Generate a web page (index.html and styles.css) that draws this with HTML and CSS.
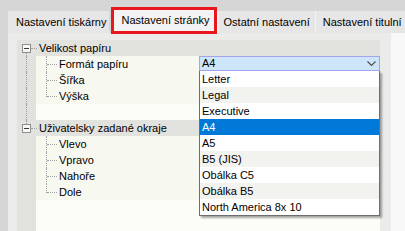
FILE: index.html
```html
<html>
<head>
    <title>Nastavení stránky</title>
    <meta name="viewport" content="width=device-width, initial-scale=1">
    <link rel="stylesheet" href="styles.css">
</head>
<body>
<div class="window">
    <div class="tabs">
        <div class="tab first">Nastavení tiskárny</div>
        <div class="tab active">Nastavení stránky</div>
        <div class="tab">Ostatní nastavení</div>
        <div class="tab">Nastavení titulní</div>
    </div>
    <div class="main">
        <div class="page">
            <div class="grid">
                <!-- === Velikost papíru === -->
                <div class="group open">
                    <span class="toggle"></span>
                    <span class="groupText">Velikost papíru</span>
                </div>
                <div class="prop">
                    <div class="gutter line"></div>
                    <div class="name">Formát papíru</div>
                    <div class="value">
                        <div class="combo">
                            <span>A4</span>
                            <svg width="9" height="6" viewBox="0 0 9 6"><path d="M0.5 0.5 L4.5 4.5 L8.5 0.5" fill="none" stroke="#4a4a4a" stroke-width="1.1"/></svg>
                        </div>
                        <ul class="list">
                            <li>Letter</li>
                            <li>Legal</li>
                            <li>Executive</li>
                            <li class="selected">A4</li>
                            <li>A5</li>
                            <li>B5 (JIS)</li>
                            <li>Obálka C5</li>
                            <li>Obálka B5</li>
                            <li>North America 8x 10</li>
                        </ul>
                    </div>
                </div>
                <div class="prop">
                    <div class="gutter line"></div>
                    <div class="name">Šířka</div>
                    <div class="value"></div>
                </div>
                <div class="prop">
                    <div class="gutter line"></div>
                    <div class="name last">Výška</div>
                    <div class="value"></div>
                </div>
                <div class="prop blank">
                    <div class="gutter line"></div>
                    <div class="name"></div>
                </div>

                <!-- === Okraje === -->
                <div class="group closing">
                    <span class="toggle"></span>
                    <span class="groupText">Uživatelsky zadané okraje</span>
                </div>
                <div class="prop">
                    <div class="gutter"></div>
                    <div class="name">Vlevo</div>
                    <div class="value"></div>
                </div>
                <div class="prop">
                    <div class="gutter"></div>
                    <div class="name">Vpravo</div>
                    <div class="value"></div>
                </div>
                <div class="prop">
                    <div class="gutter"></div>
                    <div class="name">Nahoře</div>
                    <div class="value"></div>
                </div>
                <div class="prop">
                    <div class="gutter"></div>
                    <div class="name last">Dole</div>
                    <div class="value"></div>
                </div>
                <div class="prop blank filler">
                    <div class="gutter"></div>
                    <div class="name"></div>
                </div>
            </div>
        </div>
        <div class="side"></div>
    </div>
</div>
</body>
</html>
```

FILE: styles.css
```css
body {
    margin: 0px;
    font-family: "Liberation Sans", Arial, sans-serif;
    font-size: 11px;
    color: #000;
}

.window {
    width: 405px;
    height: 231px;
    display: flex;
    flex-direction: column;
    background-color: #d6d6d7;
    overflow: hidden;
}

/*  === Tabs    === */

.tabs {
    display: flex;
    padding-top: 11px;
    padding-left: 8px;
    height: 22px;
    white-space: nowrap;
}

.tab {
    height: 22px;
    line-height: 22px;
    padding: 0px 5px 0px 7px;
    background-color: #e6e6e6;
    border-left: 1px solid #f2f2f2;
}

.tab.first {
    border-left: none;
    padding-left: 8px;
    padding-right: 3px;
}

.tab.active {
    position: relative;
    z-index: 2;
    height: 21px;
    line-height: 21px;
    margin-top: -4px;
    margin-left: 2px;
    padding: 0px 4px 0px 7px;
    border: 3px solid #e8161d;
    background-color: #f3f3f3;
}

.tab.active + .tab {
    border-left: 2px solid #f2f2f2;
    padding-left: 5px;
}

/*  === Page    === */

.main {
    flex: 1;
    display: flex;
}

.page {
    width: 363px;
    margin-left: 8px;
    padding: 7px 11px 0px 9px;
    background-color: #ebebe9;
    display: flex;
}

.side {
    flex: 1;
    background-color: #f8f8f8;
}

.grid {
    flex: 1;
    display: flex;
    flex-direction: column;
}

.group {
    position: relative;
    height: 16px;
    line-height: 16px;
    display: flex;
    background-color: #e2e2df;
}

.toggle {
    position: relative;
    box-sizing: border-box;
    width: 9px;
    height: 9px;
    margin: 4px 0px 0px 5px;
    border: 1px solid #8e8e8e;
    background-color: #f7f7f7;
}

.toggle::before {
    content: "";
    position: absolute;
    left: 1px;
    top: 3px;
    width: 5px;
    border-top: 1px solid #3a3a3a;
}

.toggle::after {
    content: "";
    position: absolute;
    left: 8px;
    top: 3px;
    width: 6px;
    border-top: 1px dotted #a0a0a0;
}

.groupText {
    margin-left: 8px;
}

.group.open::after {
    content: "";
    position: absolute;
    left: 9px;
    top: 13px;
    height: 3px;
    border-left: 1px dotted #a0a0a0;
}

.group.closing::before {
    content: "";
    position: absolute;
    left: 9px;
    top: 0px;
    height: 4px;
    border-left: 1px dotted #a0a0a0;
}

.prop {
    height: 16px;
    line-height: 16px;
    display: flex;
    background-color: #f7f8f0;
}

.prop.blank {
    background-color: #fdfdf7;
}

.prop.filler {
    flex: 1;
}

.gutter {
    position: relative;
    width: 19px;
    background-color: #e1e1de;
}

.gutter.line::before {
    content: "";
    position: absolute;
    left: 9px;
    top: 0px;
    height: 16px;
    border-left: 1px dotted #a0a0a0;
}

.name {
    position: relative;
    width: 140px;
    padding-left: 23px;
}

.prop.blank .name {
    flex: 1;
}

.prop:not(.blank) .name::before {
    content: "";
    position: absolute;
    left: 10px;
    top: 0px;
    height: 16px;
    border-left: 1px dotted #a0a0a0;
}

.prop .name.last::before {
    height: 9px;
}

.prop:not(.blank) .name::after {
    content: "";
    position: absolute;
    left: 11px;
    top: 8px;
    width: 10px;
    border-top: 1px dotted #a0a0a0;
}

.value {
    position: relative;
    flex: 1;
}

/*  === Combo box    === */

.combo {
    box-sizing: border-box;
    height: 15px;
    line-height: 13px;
    padding: 0px 3px 0px 2px;
    border: 1px solid #a4a4ee;
    background-color: #cce5f8;
    display: flex;
    justify-content: space-between;
    align-items: center;
}

.list {
    position: absolute;
    z-index: 5;
    left: 0px;
    top: 15px;
    width: 179px;
    margin: 0px;
    padding: 0px;
    list-style: none;
    background-color: #ffffff;
    border: 1px solid #6e6e6e;
    border-top: none;
    box-shadow: 2px 2px 2px rgba(0, 0, 0, 0.35);
}

.list li {
    height: 16px;
    line-height: 16px;
    padding-left: 2px;
}

.list li:nth-child(even) {
    background-color: #f2f2ef;
}

.list li.selected {
    background-color: #0078d7;
    color: #ffffff;
}
```
